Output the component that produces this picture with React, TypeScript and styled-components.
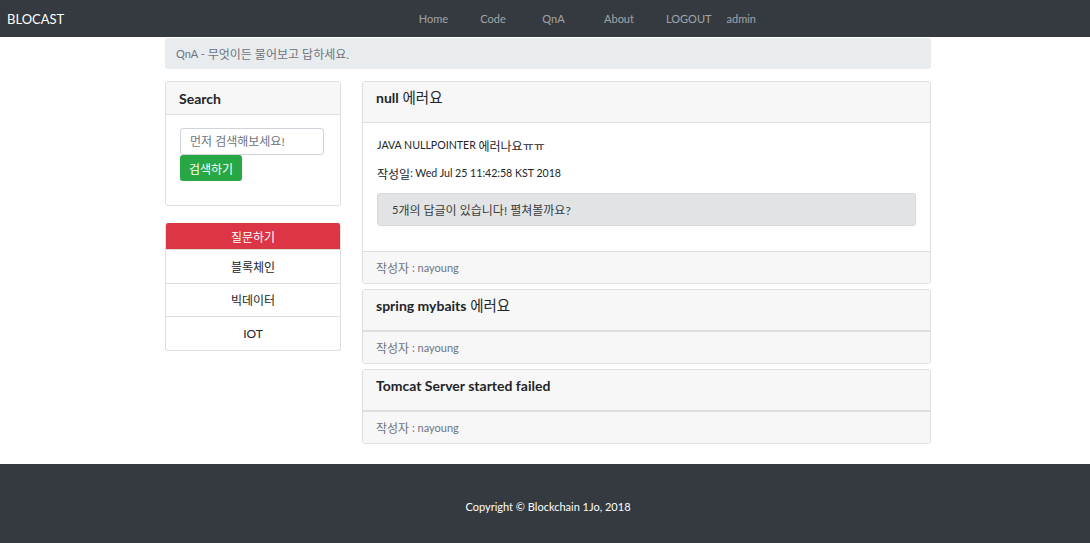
import styled, { createGlobalStyle } from 'styled-components';

const GlobalStyle = createGlobalStyle`
  body {
    margin: 0;
    font-family: Lato, "Noto Sans CJK KR", sans-serif;
    font-size: 11px;
    color: #212529;
    background: #ffffff;
  }
`;

interface Post {
  title: string;
  titleKo?: string;
  content?: string;
  contentKo?: string;
  date?: string;
  replies?: number;
  author: string;
}

const posts: Post[] = [
  {
    title: 'null',
    titleKo: '에러요',
    content: 'JAVA NULLPOINTER',
    contentKo: '에러나요ㅠㅠ',
    date: 'Wed Jul 25 11:42:58 KST 2018',
    replies: 5,
    author: 'nayoung',
  },
  { title: 'spring mybaits', titleKo: '에러요', author: 'nayoung' },
  { title: 'Tomcat Server started failed', author: 'nayoung' },
];

const navLinks = [
  { label: 'Home', width: 63 },
  { label: 'Code', width: 56 },
  { label: 'QnA', width: 65 },
  { label: 'About', width: 66 },
];

const categories = ['블록체인', '빅데이터', 'IOT'];

const App = () => {
  return (
    <Page>
      <GlobalStyle />
      <NavBar>
        <Brand>BLOCAST</Brand>
        <NavList>
          {navLinks.map((link) => (
            <NavItem key={link.label} $width={link.width}>
              {link.label}
            </NavItem>
          ))}
          <NavText $pad="0 7px 0 14px">LOGOUT</NavText>
          <NavText $pad="0 8px">admin</NavText>
        </NavList>
      </NavBar>

      <Main>
        <Container>
          <Breadcrumb>
            QnA - <Ko>무엇이든 물어보고 답하세요.</Ko>
          </Breadcrumb>
          <Row>
            <Sidebar>
              <Card>
                <CardHeader $small>Search</CardHeader>
                <SearchBody>
                  <SearchInput placeholder="먼저 검색해보세요!" />
                  <SearchButton>검색하기</SearchButton>
                </SearchBody>
              </Card>
              <ListGroup>
                <AskItem>질문하기</AskItem>
                {categories.map((c) => (
                  <ListItem key={c}>{c}</ListItem>
                ))}
              </ListGroup>
            </Sidebar>

            <PostColumn>
              {posts.map((post) => (
                <Card key={post.title}>
                  <CardHeader>
                    {post.title}
                    {post.titleKo && <Ko $size={14.5}> {post.titleKo}</Ko>}
                  </CardHeader>
                  {post.content && (
                    <PostBody>
                      <PostText>
                        {post.content} <Ko>{post.contentKo}</Ko>
                      </PostText>
                      <PostText>
                        <Ko>작성일</Ko>: {post.date}
                      </PostText>
                      <ReplyBox>
                        {post.replies}
                        <Ko>개의 답글이 있습니다! 펼쳐볼까요?</Ko>
                      </ReplyBox>
                    </PostBody>
                  )}
                  <CardFooter>
                    <Ko>작성자</Ko> : {post.author}
                  </CardFooter>
                </Card>
              ))}
            </PostColumn>
          </Row>
        </Container>
      </Main>

      <Footer>Copyright © Blockchain 1Jo, 2018</Footer>
    </Page>
  );
};

export default App;

const Page = styled.div`
  min-height: 543px;
  display: flex;
  flex-direction: column;
`;

const NavBar = styled.nav`
  height: 37px;
  background-color: #343a40;
  display: flex;
  align-items: center;
  padding: 0 7px;
`;

const Brand = styled.span`
  color: #ffffff;
  font-size: 13px;
  width: 395px;
`;

const NavList = styled.div`
  display: flex;
  align-items: center;
`;

const NavItem = styled.span<{ $width: number }>`
  width: ${(p) => p.$width}px;
  text-align: center;
  color: rgba(255, 255, 255, 0.55);
  font-size: 11px;
`;

const NavText = styled.span<{ $pad: string }>`
  padding: ${(p) => p.$pad};
  color: rgba(255, 255, 255, 0.55);
  font-size: 11px;
`;

const Ko = styled.span<{ $size?: number }>`
  font-size: ${(p) => p.$size ?? 12}px;
  font-weight: 400;
`;

const Main = styled.main`
  flex: 1;
  padding-bottom: 20px;
`;

const Container = styled.div`
  width: 766px;
  margin-left: 165px;
`;

const Breadcrumb = styled.div`
  margin-top: 1px;
  height: 31px;
  display: flex;
  align-items: center;
  padding-left: 11px;
  background-color: #e9ecef;
  border-radius: 3px;
  color: #6c757d;
  white-space: pre;
`;

const Row = styled.div`
  display: flex;
  gap: 21px;
  margin-top: 12px;
  align-items: flex-start;
`;

const Sidebar = styled.aside`
  width: 176px;
  display: flex;
  flex-direction: column;
  gap: 17px;
`;

const PostColumn = styled.section`
  flex: 1;
  display: flex;
  flex-direction: column;
  gap: 5px;
`;

const Card = styled.div`
  border: 1px solid #dfdfdf;
  border-radius: 3px;
  background: #ffffff;
  overflow: hidden;
`;

const CardHeader = styled.div<{ $small?: boolean }>`
  height: ${(p) => (p.$small ? 32 : 33)}px;
  padding: ${(p) => (p.$small ? '0' : '7px')} 0 0 13px;
  display: flex;
  align-items: ${(p) => (p.$small ? 'center' : 'flex-start')};
  background-color: #f7f7f7;
  border-bottom: 1px solid #dfdfdf;
  font-size: 14px;
  line-height: 17px;
  font-weight: 700;
  color: #212529;
  white-space: pre;
`;

const SearchBody = styled.div`
  padding: 13px 14px 24px;
  display: flex;
  flex-direction: column;
  align-items: flex-start;
`;

const SearchInput = styled.input`
  width: 144px;
  height: 27px;
  box-sizing: border-box;
  border: 1px solid #ced4da;
  border-radius: 3px;
  padding: 0 9px;
  font-family: inherit;
  font-size: 12px;
  color: #495057;
  &::placeholder {
    color: #6c757d;
  }
`;

const SearchButton = styled.button`
  width: 62px;
  height: 26px;
  border: none;
  border-radius: 3px;
  background-color: #28a745;
  color: #ffffff;
  font-family: inherit;
  font-size: 12px;
  padding: 0;
`;

const ListGroup = styled.div`
  display: flex;
  flex-direction: column;
  border-radius: 3px;
  overflow: hidden;
  border: 1px solid #dfdfdf;
  border-top: none;
`;

const AskItem = styled.div`
  height: 26px;
  display: flex;
  align-items: center;
  justify-content: center;
  background-color: #dc3545;
  color: #ffffff;
  font-size: 12px;
`;

const ListItem = styled.div`
  height: 33.5px;
  box-sizing: border-box;
  display: flex;
  align-items: center;
  justify-content: center;
  border-top: 1px solid #dfdfdf;
  font-size: 12px;
  color: #212529;
`;

const PostBody = styled.div`
  padding: 14px 14px 25px;
`;

const PostText = styled.p`
  margin: 0 0 12px;
  height: 16px;
  display: flex;
  align-items: center;
  font-size: 10.6px;
  white-space: pre;
`;

const ReplyBox = styled.div`
  height: 33px;
  display: flex;
  align-items: center;
  padding-left: 14px;
  background-color: #e2e3e5;
  border: 1px solid #d6d8db;
  border-radius: 3px;
  box-sizing: border-box;
  color: #383d41;
`;

const CardFooter = styled.div`
  height: 31px;
  display: flex;
  align-items: center;
  padding-left: 13px;
  background-color: #f7f7f7;
  border-top: 1px solid #dfdfdf;
  color: #6c757d;
  white-space: pre;
`;

const Footer = styled.footer`
  height: 74px;
  padding: 5px 0 0 6px;
  background-color: #343a40;
  color: #ffffff;
  display: flex;
  align-items: center;
  justify-content: center;
`;
